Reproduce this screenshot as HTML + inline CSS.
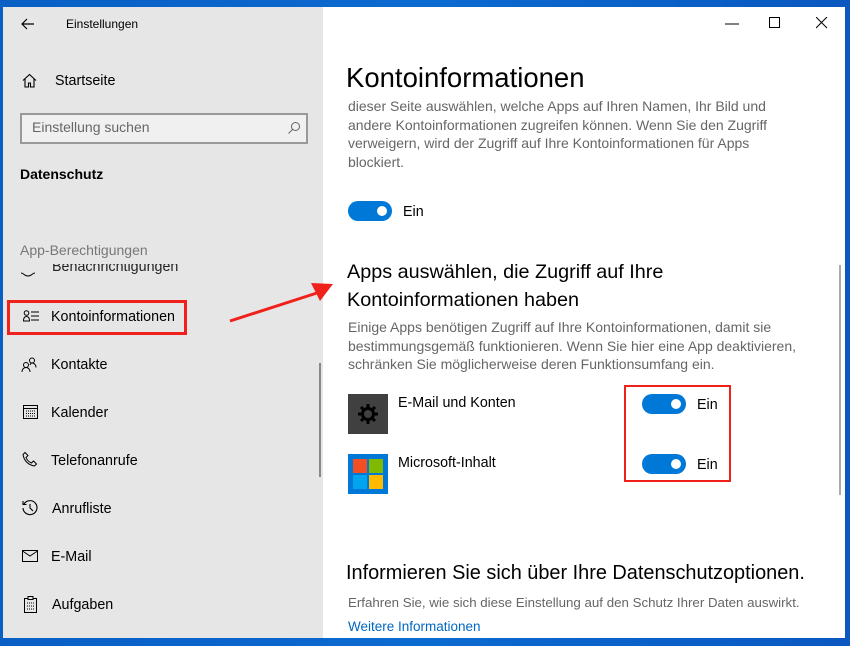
<!DOCTYPE html>
<html><head><meta charset="utf-8"><style>
*{margin:0;padding:0;box-sizing:border-box}
body{width:850px;height:646px;overflow:hidden;background:linear-gradient(90deg,#0a5fc4,#0b6ad0 50%,#0a58c0);font-family:"Liberation Sans",sans-serif;position:relative}
.win{position:absolute;left:3px;top:7px;width:842px;height:631px;background:#fff;overflow:hidden}
.side{position:absolute;left:0;top:0;width:320px;height:631px;background:#e6e6e6}
.a{position:absolute;white-space:nowrap}
.s{font-size:14.3px;color:#000}
.p{font-size:14px;color:#666;line-height:18.5px}
.tog{position:absolute;width:44px;height:20px;border-radius:10px;background:#0078d7}
.tog::after{content:"";position:absolute;right:5px;top:5px;width:10px;height:10px;border-radius:50%;background:#fff}
svg{position:absolute}
</style></head><body>
<div class="win">
<div class="side">
<svg style="left:17px;top:9px" width="16" height="16" viewBox="0 0 16 16"><path d="M14 8H2M7 3L2 8l5 5" fill="none" stroke="#000" stroke-width="1.2"/></svg>
<div class="a" style="left:63px;top:10px;font-size:12px">Einstellungen</div>
<svg style="left:19px;top:66px" width="15" height="15" viewBox="0 0 15 15"><path d="M1 7.5L7.5 1.5 14 7.5M3 6v8h3.5v-4h2v4H12V6" fill="none" stroke="#000" stroke-width="1.1"/></svg>
<div class="a s" style="left:52px;top:66px">Startseite</div>
<div class="a" style="left:17px;top:106px;width:288px;height:31px;border:2px solid #999;background:#f0f0f0"></div>
<div class="a" style="left:29px;top:112px;font-size:14px;color:#666">Einstellung suchen</div>
<svg style="left:284px;top:114px" width="14" height="14" viewBox="0 0 14 14"><circle cx="8.5" cy="5.5" r="4" fill="none" stroke="#666"/><path d="M5.5 8.5L1.5 12.5" stroke="#666"/></svg>
<div class="a" style="left:17px;top:159px;font-size:14px;font-weight:bold">Datenschutz</div>
<div class="a" style="left:17px;top:235px;font-size:14px;color:#777">App-Berechtigungen</div>
<div class="a s" style="left:49px;top:257px;height:12px;overflow:hidden;color:#222"><div style="margin-top:-5px">Benachrichtigungen</div></div>
<svg style="left:17px;top:265px" width="16" height="6" viewBox="0 0 16 6"><path d="M1 1c3 0 3 3 7 3s4-3 7-3" fill="none" stroke="#000"/></svg>
<div class="a" style="left:4px;top:293px;width:180px;height:35px;border:3px solid #f0201a"></div>
<svg style="left:20px;top:303px" width="17" height="12" viewBox="0 0 17 12"><circle cx="3.5" cy="3" r="2.3" fill="none" stroke="#000"/><path d="M.5 11c0-3 1.3-4.5 3-4.5s3 1.5 3 4.5z" fill="none" stroke="#000"/><path d="M8 2h8M8 6h8M8 10h8" stroke="#000"/></svg>
<div class="a s" style="left:48px;top:302px">Kontoinformationen</div>
<svg style="left:18px;top:350px" width="17" height="16" viewBox="0 0 17 16"><circle cx="5" cy="8" r="2.5" fill="none" stroke="#000"/><path d="M1 15c0-3 2-4.5 4-4.5s4 1.5 4 4.5" fill="none" stroke="#000"/><circle cx="11" cy="3.5" r="2.5" fill="none" stroke="#000"/><path d="M9 8c.5-1.5 1-2 2-2 2 0 4 1.5 4 4.5" fill="none" stroke="#000"/></svg>
<div class="a s" style="left:48px;top:350px">Kontakte</div>
<svg style="left:20px;top:397px" width="15" height="15" viewBox="0 0 15 15"><rect x=".5" y="1.5" width="14" height="13" fill="none" stroke="#000"/><path d="M.5 4.5h14" stroke="#000"/><path d="M3 7h9M3 9.5h9M3 12h9" stroke="#000" stroke-dasharray="1 1"/></svg>
<div class="a s" style="left:48px;top:398px">Kalender</div>
<svg style="left:18px;top:444px" width="17" height="17" viewBox="0 0 17 17"><path d="M4 1.5l3 3-2 2c1 2.5 3 4.5 5.5 5.5l2-2 3 3-2 2C7 14 3 9.5 2 3.5z" fill="none" stroke="#000"/></svg>
<div class="a s" style="left:48px;top:446px">Telefonanrufe</div>
<svg style="left:18px;top:492px" width="17" height="17" viewBox="0 0 17 17"><path d="M3 5A7 7 0 1 1 2 9" fill="none" stroke="#000" stroke-width="1.1"/><path d="M2 2v3.5h3.5M9 5v4l3 3" fill="none" stroke="#000" stroke-width="1.1"/></svg>
<div class="a s" style="left:49px;top:494px">Anrufliste</div>
<svg style="left:19px;top:543px" width="16" height="12" viewBox="0 0 16 12"><rect x=".5" y=".5" width="15" height="11" fill="none" stroke="#000"/><path d="M.5 1l7.5 5 7.5-5" fill="none" stroke="#000"/></svg>
<div class="a s" style="left:48px;top:542px">E-Mail</div>
<svg style="left:21px;top:589px" width="13" height="17" viewBox="0 0 13 17"><rect x=".5" y="2.5" width="12" height="14" fill="none" stroke="#000"/><rect x="4" y=".5" width="5" height="3" fill="#e6e6e6" stroke="#000"/><path d="M3 7h7M3 10h7M3 13h7" stroke="#000" stroke-dasharray="1 1"/></svg>
<div class="a s" style="left:49px;top:590px">Aufgaben</div>
<div class="a" style="left:316px;top:356px;width:2px;height:114px;background:#888"></div>
</div>
<svg style="left:722px;top:16px" width="14" height="2"><path d="M0 1h14" stroke="#000"/></svg>
<svg style="left:766px;top:10px" width="12" height="12"><rect x=".5" y=".5" width="10" height="10" fill="none" stroke="#000"/></svg>
<svg style="left:813px;top:10px" width="12" height="12"><path d="M0 0l11 11M11 0L0 11" stroke="#000"/></svg>
<div class="a" style="left:343px;top:55px;font-size:27.5px;color:#000">Kontoinformationen</div>
<div class="a p" style="left:345px;top:91px;height:75px;overflow:hidden"><div style="margin-top:-1px">dieser Seite auswählen, welche Apps auf Ihren Namen, Ihr Bild und<br>andere Kontoinformationen zugreifen können. Wenn Sie den Zugriff<br>verweigern, wird der Zugriff auf Ihre Kontoinformationen für Apps<br>blockiert.</div></div>
<div class="tog" style="left:345px;top:194px"></div>
<div class="a s" style="left:400px;top:197px">Ein</div>
<div class="a" style="left:344px;top:251px;font-size:19.8px;line-height:28px;color:#000">Apps auswählen, die Zugriff auf Ihre<br>Kontoinformationen haben</div>
<div class="a p" style="left:345px;top:311px">Einige Apps benötigen Zugriff auf Ihre Kontoinformationen, damit sie<br>bestimmungsgemäß funktionieren. Wenn Sie hier eine App deaktivieren,<br>schränken Sie möglicherweise deren Funktionsumfang ein.</div>
<div class="a" style="left:345px;top:387px;width:40px;height:40px;background:#404040"></div>
<svg style="left:353px;top:395px" width="24" height="24" viewBox="0 0 24 24"><g stroke="#000" stroke-width="3"><path d="M12 2v20M2 12h20M5 5l14 14M19 5L5 19"/></g><circle cx="12" cy="12" r="7" fill="#000"/><circle cx="12" cy="12" r="4" fill="#404040"/></svg>
<div class="a s" style="left:395px;top:388px">E-Mail und Konten</div>
<div class="a" style="left:345px;top:447px;width:40px;height:40px;background:#0078d7"></div>
<div class="a" style="left:350px;top:452px;width:14px;height:14px;background:#f25022"></div>
<div class="a" style="left:366px;top:452px;width:14px;height:14px;background:#7fba00"></div>
<div class="a" style="left:350px;top:468px;width:14px;height:14px;background:#00a4ef"></div>
<div class="a" style="left:366px;top:468px;width:14px;height:14px;background:#ffb900"></div>
<div class="a s" style="left:395px;top:448px">Microsoft-Inhalt</div>
<div class="a" style="left:621px;top:378px;width:107px;height:97px;border:2px solid #f0201a"></div>
<div class="tog" style="left:639px;top:387px"></div>
<div class="a s" style="left:694px;top:390px">Ein</div>
<div class="tog" style="left:639px;top:447px"></div>
<div class="a s" style="left:694px;top:450px">Ein</div>
<div class="a" style="left:343px;top:555px;font-size:19.9px;color:#000">Informieren Sie sich über Ihre Datenschutzoptionen.</div>
<div class="a" style="left:345px;top:588px;font-size:13.3px;color:#666">Erfahren Sie, wie sich diese Einstellung auf den Schutz Ihrer Daten auswirkt.</div>
<div class="a" style="left:345px;top:612px;font-size:13.5px;color:#0067c0">Weitere Informationen</div>
<div class="a" style="left:836px;top:258px;width:2px;height:230px;background:#aaa"></div>
</div>
<svg style="left:225px;top:280px" width="120" height="45" viewBox="0 0 120 45"><path d="M5 41L95 12" stroke="#f0201a" stroke-width="3"/><path d="M108 4L86 3 95 21z" fill="#f0201a"/></svg>
</body></html>
